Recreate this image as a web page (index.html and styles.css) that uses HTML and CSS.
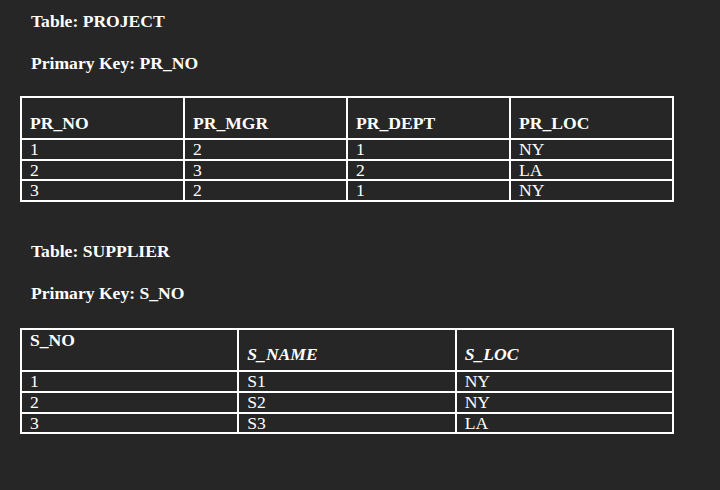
FILE: index.html
```html
<!DOCTYPE html>
<html>
<head>
<meta charset="utf-8">
<link rel="stylesheet" href="styles.css">
</head>
<body>
<p class="title">Table: PROJECT</p>
<p class="key">Primary Key: PR_NO</p>
<table class="grid">
  <thead>
    <tr><th>PR_NO</th><th>PR_MGR</th><th>PR_DEPT</th><th>PR_LOC</th></tr>
  </thead>
  <tbody>
    <tr><td>1</td><td>2</td><td>1</td><td>NY</td></tr>
    <tr><td>2</td><td>3</td><td>2</td><td>LA</td></tr>
    <tr><td>3</td><td>2</td><td>1</td><td>NY</td></tr>
  </tbody>
</table>
<p class="title second">Table: SUPPLIER</p>
<p class="key">Primary Key: S_NO</p>
<table class="grid lower">
  <thead>
    <tr><th class="top">S_NO</th><th class="it">S_NAME</th><th class="it">S_LOC</th></tr>
  </thead>
  <tbody>
    <tr><td>1</td><td>S1</td><td>NY</td></tr>
    <tr><td>2</td><td>S2</td><td>NY</td></tr>
    <tr><td>3</td><td>S3</td><td>LA</td></tr>
  </tbody>
</table>
</body>
</html>
```
FILE: styles.css
```css
html, body {
  margin: 0;
  background: #262626;
}
body {
  padding: 0 20px;
  color: #ffffff;
  font-family: "Liberation Serif", "Times New Roman", serif;
  font-size: 17.6px;
}
.title, .key {
  margin: 0 0 0 11px;
  font-weight: bold;
  line-height: 20px;
}
.title {
  padding-top: 11px;
}
.title.second {
  padding-top: 39px;
}
.key {
  margin-top: 22px;
}
.grid {
  margin-top: 23px;
  width: 654px;
  table-layout: fixed;
  border-collapse: collapse;
  border: 2px solid #ffffff;
}
.grid.lower {
  margin-top: 25px;
}
.grid th, .grid td {
  border: 2px solid #ffffff;
  padding: 0 0 0 8px;
  text-align: left;
}
.grid th {
  height: 42px;
  box-sizing: border-box;
  vertical-align: bottom;
  padding-bottom: 5px;
  line-height: 20px;
  font-weight: bold;
}
.grid th.top {
  vertical-align: top;
  padding-bottom: 0;
}
.grid th.it {
  font-style: italic;
  padding-bottom: 6px;
}
.grid td {
  line-height: 18.7px;
}
```
